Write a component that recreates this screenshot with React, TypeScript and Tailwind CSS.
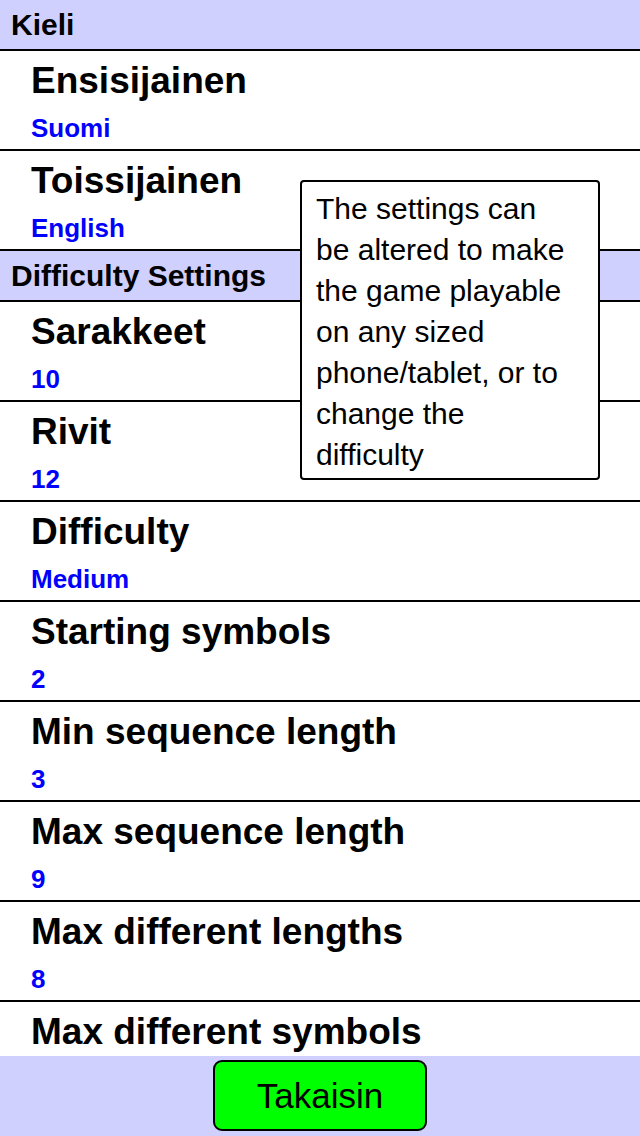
import React from "react";

interface SettingRow {
  label: string;
  value?: string;
}

const languageRows: SettingRow[] = [
  { label: "Ensisijainen", value: "Suomi" },
  { label: "Toissijainen", value: "English" },
];

// last row sits under the bottom bar, its value is never visible
const difficultyRows: SettingRow[] = [
  { label: "Sarakkeet", value: "10" },
  { label: "Rivit", value: "12" },
  { label: "Difficulty", value: "Medium" },
  { label: "Starting symbols", value: "2" },
  { label: "Min sequence length", value: "3" },
  { label: "Max sequence length", value: "9" },
  { label: "Max different lengths", value: "8" },
  { label: "Max different symbols" },
];

function SectionHeader({ title }: { title: string }) {
  return (
    <div className="h-[51px] shrink-0 border-b-2 border-black bg-[#d0d0ff] pl-[11px] pt-[10px]">
      <p className="text-[30px] font-bold leading-[30px] text-black">{title}</p>
    </div>
  );
}

function SettingItem({ label, value }: SettingRow) {
  return (
    <div className="h-[100px] shrink-0 border-b-2 border-black bg-white pl-[31px] pt-[11px]">
      <p className="text-[37px] font-bold leading-[37px] text-black">{label}</p>
      {value ? (
        <p className="mt-[16px] text-[26px] font-bold leading-[26px] text-[#0000ff]">{value}</p>
      ) : null}
    </div>
  );
}

export default function App() {
  return (
    <div className="relative flex h-[1136px] w-[640px] flex-col overflow-hidden bg-white font-[family-name:Liberation_Sans,Arial,sans-serif]">
      <div className="flex min-h-0 flex-1 flex-col overflow-hidden">
        <SectionHeader title="Kieli" />
        {languageRows.map((row) => (
          <SettingItem key={row.label} {...row} />
        ))}
        <SectionHeader title="Difficulty Settings" />
        {difficultyRows.map((row) => (
          <SettingItem key={row.label} {...row} />
        ))}
      </div>

      <div className="flex h-[80px] shrink-0 justify-center bg-[#d0d0ff] pt-[4px]">
        <button
          type="button"
          className="h-[71px] w-[214px] rounded-[9px] border-2 border-black bg-[#00ff00] text-[35px] leading-none text-black"
        >
          Takaisin
        </button>
      </div>

      <div className="absolute left-[300px] top-[180px] h-[300px] w-[300px] rounded-[4px] border-2 border-black bg-white pl-[14px] pr-[24px] pt-[6px]">
        <p className="text-[30px] leading-[41px] text-black">
          The settings can be altered to make the game playable on any sized phone/tablet, or to change the difficulty
        </p>
      </div>
    </div>
  );
}
